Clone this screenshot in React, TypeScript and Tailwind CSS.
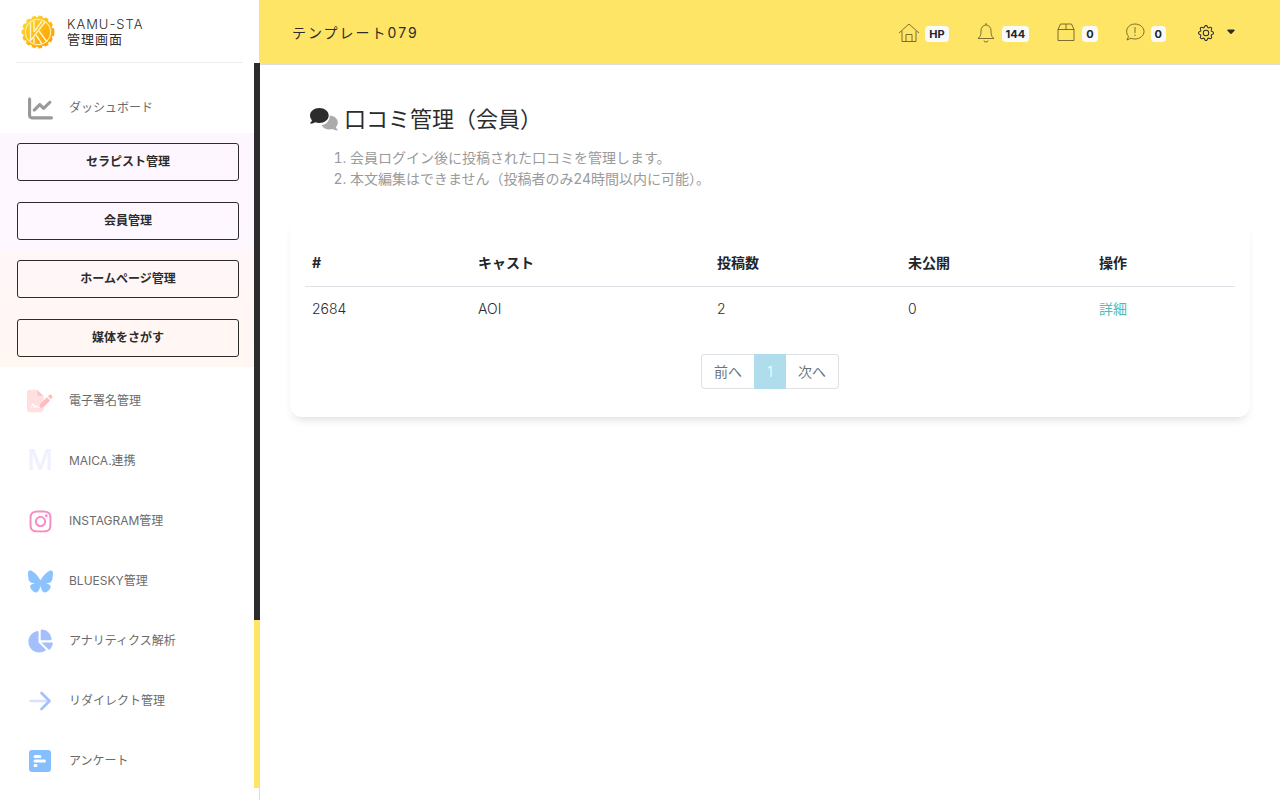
import React from "react";
import { FaBluesky, FaCaretDown, FaChartLine, FaChartPie, FaInstagram } from "react-icons/fa6";

const columns = [
  { label: "#", width: "w-[166px]" },
  { label: "キャスト", width: "w-[239px]" },
  { label: "投稿数", width: "w-[191px]" },
  { label: "未公開", width: "w-[191px]" },
  { label: "操作", width: "w-auto" },
];

const reviews = [{ id: 2684, cast: "AOI", posts: 2, hidden: 0 }];

function Logo() {
  return (
    <svg viewBox="0 0 34 34" className="h-[34px] w-[34px]" fill="none">
      <defs>
        <linearGradient id="gold" x1="0" y1="0" x2="1" y2="1">
          <stop offset="0" stopColor="#fddc3c" />
          <stop offset="0.500" stopColor="#ffb914" />
          <stop offset="1" stopColor="#ff9a05" />
        </linearGradient>
      </defs>
      <circle cx="17" cy="17" r="15" fill="url(#gold)" />
      <circle cx="17" cy="17" r="15.2" stroke="url(#gold)" strokeWidth="2.500" strokeDasharray="4 2.500" />
      <circle cx="17" cy="17" r="12.6" stroke="#fff0a0" strokeWidth="1.2" />
      <g stroke="#fff6c8" strokeWidth="1.4">
        <line x1="9.5" y1="8" x2="9.5" y2="26" />
        <line x1="13" y1="6" x2="13" y2="17" />
        <line x1="13" y1="23" x2="13" y2="28" />
        <line x1="13" y1="17" x2="21" y2="6" />
        <line x1="10" y1="25" x2="24" y2="7" />
        <line x1="15" y1="20" x2="21" y2="29" />
        <line x1="18" y1="16" x2="26" y2="27" />
      </g>
    </svg>
  );
}

function SignatureIcon() {
  return (
    <svg viewBox="0 0 28 26" className="h-[26px] w-7">
      <path d="M3 1h8v5a2 2 0 0 0 2 2h5v14a3 3 0 0 1-3 3H3a3 3 0 0 1-3-3V4a3 3 0 0 1 3-3z" fill="#ffdfdf" />
      <path d="M11 1l7 7h-5a2 2 0 0 1-2-2z" fill="#ffc5c5" />
      <path d="M4 20l2.5-4 1.5 4 2-2 1 2h3" fill="none" stroke="#fff" strokeWidth="1.2" />
      <path d="M13.500 20.500l1-4.500 7-7 3.500 3.500-7 7z" fill="#ffbcbc" />
      <path d="M22.500 8l1.200-1.200a2 2 0 0 1 3 3L25.500 11z" fill="#ffbcbc" />
    </svg>
  );
}

function PollIcon() {
  return (
    <svg viewBox="0 0 24 24" className="h-6 w-6">
      <rect x="1" y="1" width="22" height="22" rx="3" fill="#86beff" />
      <g stroke="#fff" strokeWidth="3" strokeLinecap="round">
        <path d="M7 7.500h5M7 12h9.500M7 16.500h1" />
      </g>
    </svg>
  );
}

function RedirectIcon() {
  return (
    <svg viewBox="0 0 24 24" className="h-6 w-6" fill="none" strokeWidth="2.600" strokeLinecap="round" strokeLinejoin="round">
      <path d="M2.500 12h17" stroke="#d6e2ff" />
      <path d="M13.500 4l8 8-8 8" stroke="#a3bffc" />
    </svg>
  );
}

function CommentsIcon() {
  return (
    <svg viewBox="0 0 28 24" className="h-6 w-7">
      <path d="M19.800 8.500c4.600.3 8 3.200 8 7 0 1.800-.8 3.400-2 4.600.3 1.200 1.200 2 1.700 2.500.3.300.1.900-.4.900-1.900 0-3.400-.8-4.400-1.500-4.200 1.300-9.300-.2-11.200-3.800 5-.6 8.300-4.700 8.300-9.700z" fill="#ababab" />
      <path d="M9.300 1C4.200 1 0 4.400 0 8.500c0 1.800.8 3.400 2 4.700-.3 1.200-1.200 2.100-1.700 2.600-.3.300-.1.900.4.900 1.900 0 3.400-.8 4.400-1.500 1.300.5 2.700.8 4.200.8 5.200 0 9.400-3.400 9.400-7.500S14.500 1 9.300 1z" fill="#2c2c2c" />
    </svg>
  );
}

function LineIcon({ children }: { children: React.ReactNode }) {
  return (
    <svg viewBox="1 0 18 20" className="h-5 w-[18px] overflow-visible" fill="none" stroke="#5a5124" strokeWidth="0.800">
      {children}
    </svg>
  );
}

function GearIcon() {
  return (
    <svg viewBox="0 0 16 16" className="h-4 w-4" fill="#2c2c2c">
      <path d="M8 4.754a3.246 3.246 0 1 0 0 6.492 3.246 3.246 0 0 0 0-6.492M5.754 8a2.246 2.246 0 1 1 4.492 0 2.246 2.246 0 0 1-4.492 0" />
      <path d="M9.796 1.343c-.527-1.790-3.065-1.790-3.592 0l-.094.319a.873.873 0 0 1-1.255.520l-.292-.160c-1.640-.892-3.433.902-2.540 2.541l.159.292a.873.873 0 0 1-.520 1.255l-.319.094c-1.790.527-1.790 3.065 0 3.592l.319.094a.873.873 0 0 1 .520 1.255l-.160.292c-.892 1.640.901 3.434 2.541 2.540l.292-.159a.873.873 0 0 1 1.255.520l.094.319c.527 1.790 3.065 1.790 3.592 0l.094-.319a.873.873 0 0 1 1.255-.520l.292.160c1.640.893 3.434-.902 2.540-2.541l-.159-.292a.873.873 0 0 1 .520-1.255l.319-.094c1.790-.527 1.790-3.065 0-3.592l-.319-.094a.873.873 0 0 1-.520-1.255l.160-.292c.893-1.640-.902-3.433-2.541-2.540l-.292.159a.873.873 0 0 1-1.255-.520zm-2.633.283c.246-.835 1.428-.835 1.674 0l.094.319a1.873 1.873 0 0 0 2.693 1.115l.291-.160c.764-.415 1.600.420 1.184 1.185l-.159.292a1.873 1.873 0 0 0 1.116 2.692l.318.094c.835.246.835 1.428 0 1.674l-.319.094a1.873 1.873 0 0 0-1.115 2.693l.160.291c.415.764-.420 1.600-1.185 1.184l-.291-.159a1.873 1.873 0 0 0-2.693 1.116l-.094.318c-.246.835-1.428.835-1.674 0l-.094-.319a1.873 1.873 0 0 0-2.692-1.115l-.292.160c-.764.415-1.600-.420-1.184-1.185l.159-.291A1.873 1.873 0 0 0 1.945 8.930l-.319-.094c-.835-.246-.835-1.428 0-1.674l.319-.094A1.873 1.873 0 0 0 3.060 4.377l-.160-.292c-.415-.764.420-1.600 1.185-1.184l.292.159a1.873 1.873 0 0 0 2.692-1.115z" />
    </svg>
  );
}

const menuGroups = [
  {
    id: "people",
    background: "bg-linear-to-b from-[#fdf6ff] to-[#fdf7ff]",
    items: ["セラピスト管理", "会員管理"],
  },
  {
    id: "site",
    background: "bg-linear-to-b from-[#fff6f9] to-[#fff7f2]",
    items: ["ホームページ管理", "媒体をさがす"],
  },
];

const links = [
  { label: "電子署名管理", icon: <SignatureIcon /> },
  { label: "MAICA.連携", icon: <span className="text-[28px] font-medium text-[#f0f0ff]">M</span> },
  { label: "INSTAGRAM管理", icon: <FaInstagram size={25} color="#f58cc4" /> },
  { label: "BLUESKY管理", icon: <FaBluesky size={25} color="#8cc3ff" /> },
  { label: "アナリティクス解析", icon: <FaChartPie size={26} color="#a3bffc" /> },
  { label: "リダイレクト管理", icon: <RedirectIcon /> },
  { label: "アンケート", icon: <PollIcon /> },
];

const notices = [
  {
    id: "home",
    count: "HP",
    icon: <path d="M0 10L10 1l10 9M3 8v10.500h14V8M7 18.500v-7h6v7" />,
  },
  {
    id: "bell",
    count: "144",
    icon: (
      <path d="M2 15.500c2-1.500 3-3 3-8a5 5.500 0 0 1 10 0c0 5 1 6.500 3 8zM8 17.500a2 1.500 0 0 0 4 0M10 2V0" />
    ),
  },
  {
    id: "box",
    count: "0",
    icon: <path d="M2 6.500h16v11H2zM2 6.500L4.500 1h11L18 6.500M10 1v5.500" />,
  },
  {
    id: "message",
    count: "0",
    icon: (
      <path d="M2 17l1.500-3.500C-1 8 3 1 10 1c5 0 9 3.500 9 7.500S15 16 10 16c-1.500 0-3-.3-4-.8zM10 4v6M10 11.500v1.500" />
    ),
  },
];

function Sidebar() {
  return (
    <aside className="sticky top-0 flex h-screen w-[260px] shrink-0 flex-col border-r border-[#ddd] pb-3">
      <a href="#" className="mx-4 flex h-[63px] shrink-0 items-center gap-3 border-b border-[#ededed] pt-[2px] pl-[5px] text-[13px] leading-[15px] tracking-[1px]">
        <Logo />
        <span>
          <span className="font-light">KAMU-STA</span>
          <br />
          管理画面
        </span>
      </a>
      <div className="-mr-px flex min-h-0 flex-1">
        <nav className="min-w-0 flex-1 overflow-hidden text-xs text-[#6b6b6b]">
          <a href="#" className="flex h-[70px] items-center gap-4 pt-5 pl-[27px]">
            <span className="flex w-[26px] justify-center">
              <FaChartLine size={25} color="#999999" />
            </span>
            ダッシュボード
          </a>
          {menuGroups.map((group) => (
            <div key={group.id} className={`flex flex-col gap-px ${group.background}`}>
              {group.items.map((item) => (
                <div key={item} className="py-[10px] pr-[15px] pl-[17px]">
                  <button className="h-[38px] w-full rounded-[3px] border border-[#2c2c2c] font-bold text-[#2c2c2c]">
                    {item}
                  </button>
                </div>
              ))}
            </div>
          ))}
          <div className="pt-1">
            {links.map((link) => (
              <a key={link.label} href="#" className="flex h-[60px] items-center gap-4 pl-[27px]">
                <span className="flex w-[26px] justify-center">{link.icon}</span>
                {link.label}
              </a>
            ))}
          </div>
        </nav>
        <div className="w-[6px] bg-[#fee566]">
          <div className="h-[557px] bg-[#2c2c2c]" />
        </div>
      </div>
    </aside>
  );
}

function Header() {
  return (
    <header className="flex h-[65px] items-center justify-between border-b border-[#ddd] bg-[#fee566] pt-px pr-[43px] pl-8">
      <a href="#" className="text-sm tracking-[2px]">テンプレート079</a>
      <nav className="flex items-center gap-7">
        {notices.map((notice) => (
          <a key={notice.id} href="#" className="flex items-center gap-[7px]">
            <LineIcon>{notice.icon}</LineIcon>
            <span className="mt-[2px] rounded bg-[#f9fafc] px-1 text-[11px] leading-4 font-bold text-[#212529]">
              {notice.count}
            </span>
          </a>
        ))}
        <button className="ml-1 flex items-center gap-[11px]" aria-label="設定">
          <GearIcon />
          <FaCaretDown size={12} color="#2c2c2c" className="mb-1" />
        </button>
      </nav>
    </header>
  );
}

function App() {
  return (
    <div className="flex min-h-screen bg-white font-['Inter','Noto_Sans_CJK_JP',sans-serif] text-[#2c2c2c]">
      <Sidebar />
      <div className="min-w-0 flex-1">
        <Header />
        <main className="px-[30px] pt-[38px]">
          <div className="px-5">
            <h1 className="flex items-center gap-[6px] text-[22px] leading-8">
              <CommentsIcon />
              口コミ管理（会員）
            </h1>
            <ol className="mt-3 list-decimal pl-10 text-sm leading-[21px] text-[#9a9a9a]">
              <li>会員ログイン後に投稿された口コミを管理します。</li>
              <li>本文編集はできません（投稿者のみ24時間以内に可能）。</li>
            </ol>
          </div>

          <div className="mt-[30px] rounded-[12px] bg-white px-[15px] pt-5 pb-7 shadow-[0_6px_10px_-4px_rgba(0,0,0,0.15)]">
            <table className="w-full table-fixed text-left text-sm font-light">
              <thead>
                <tr className="h-[47px] border-b border-[#dee2e6]">
                  {columns.map((column) => (
                    <th key={column.label} className={`px-[7px] pt-[2px] font-bold text-[#212529] ${column.width}`}>
                      {column.label}
                    </th>
                  ))}
                </tr>
              </thead>
              <tbody>
                {reviews.map((review) => (
                  <tr key={review.id} className="h-[45px]">
                    <td className="px-[7px]">{review.id}</td>
                    <td className="px-[7px]">{review.cast}</td>
                    <td className="px-[7px]">{review.posts}</td>
                    <td className="px-[7px]">{review.hidden}</td>
                    <td className="px-[7px]">
                      <a href="#" className="font-normal text-[#51bcc0]">詳細</a>
                    </td>
                  </tr>
                ))}
              </tbody>
            </table>
            <div className="mt-[23px] flex justify-center text-sm text-[#6c757d]">
              <button className="h-[35px] rounded-l border border-r-0 border-[#dee2e6] px-3">前へ</button>
              <button className="h-[35px] w-8 bg-[#b0ddeb] font-light text-white">1</button>
              <button className="h-[35px] rounded-r border border-l-0 border-[#dee2e6] px-3">次へ</button>
            </div>
          </div>
        </main>
      </div>
    </div>
  );
}

export default App;
